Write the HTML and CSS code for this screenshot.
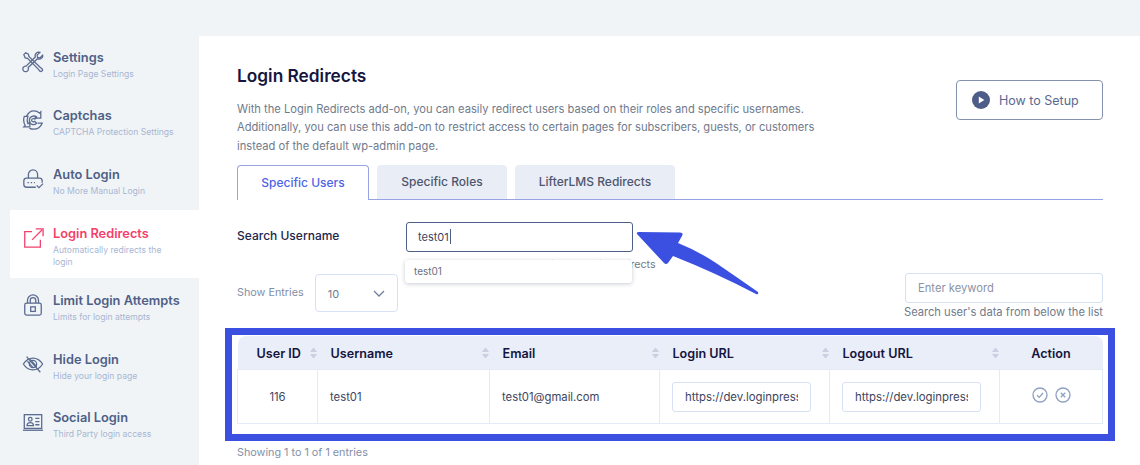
FILE: index.html
```html
<!DOCTYPE html>
<html lang="en">
<head>
    <meta charset="UTF-8">
    <meta name="viewport" content="width=device-width, initial-scale=1.0">
    <title>Login Redirects</title>
    <link rel="stylesheet" href="styles.css">
</head>
<body>
    <div class="layout">
        <aside class="sidebar">
            <a class="nav-item">
                <svg class="nav-icon" viewBox="0 0 24 24"><path d="M2 4l2-2 3 1.500.5 2.500L20 18l2 1.500.5 1.500-1.500 1.500-1.500-.5L18 20 6 8 3.500 7.500z"/><path d="M22.500 4.500l-3 3-2.500-.5-.5-2.500 3-3c-3-.8-6 1.500-5 5L4.500 16.500c-2.800-.5-4.500 2.500-3 4.800 1.500 2 5.500 1.500 5.500-1.800 0-.5 0-1-.2-1.500l10-9.500c3.500 1 6.500-1.500 5.700-4z"/></svg>
                <span class="nav-text"><strong>Settings</strong><small>Login Page Settings</small></span>
            </a>
            <a class="nav-item">
                <svg class="nav-icon" viewBox="0 0 24 24"><path d="M5 8c1.500-3.500 4.500-6 8-6 2.500 0 4.500 1 6 2.500l1.500-1.500v7h-6.500l2-2"/><path d="M5 8H2.500c-1 3-.8 7 1 10l-1.500 1.500h6.500v-5l-2 1.500C5.500 14 5.500 11 6.500 8z"/><path d="M17 15.500h5c-1.500 4-5 6.500-9.500 6.500-1.500 0-3-.4-4.500-1.200"/><path d="M16 9c-2.500-2.500-8-1.500-8 3.500s5.500 5.500 8 3l-2-2c-1.500 1-3.500.5-3.500-1.200s2-2.300 3.500-1.300z"/></svg>
                <span class="nav-text"><strong>Captchas</strong><small>CAPTCHA Protection Settings</small></span>
            </a>
            <a class="nav-item">
                <svg class="nav-icon" viewBox="0 0 24 24"><path d="M7 11V7a5 5 0 0 1 10 0v4"/><path d="M15 21H5a3 3 0 0 1-3-3v-4a3 3 0 0 1 3-3h14a3 3 0 0 1 3 3v2"/><path d="M6 16h8" stroke-dasharray="1.5 2"/><path d="M16 19l2.500 2.500L23 17"/></svg>
                <span class="nav-text"><strong>Auto Login</strong><small>No More Manual Login</small></span>
            </a>
            <a class="nav-item active">
                <svg class="nav-icon" viewBox="0 0 24 24"><path d="M11 5H3v17h17v-8"/><path d="M11 14L22 3"/><path d="M15 2h8v8"/></svg>
                <span class="nav-text"><strong>Login Redirects</strong><small>Automatically redirects the login</small></span>
            </a>
            <a class="nav-item">
                <svg class="nav-icon" viewBox="0 0 24 24"><rect x="3" y="10" width="18" height="13" rx="2"/><path d="M6 10V7a6 6 0 0 1 12 0v3"/><path d="M9 10V7a3 3 0 0 1 6 0v3"/><rect x="9.500" y="14" width="5" height="5"/></svg>
                <span class="nav-text"><strong>Limit Login Attempts</strong><small>Limits for login attempts</small></span>
            </a>
            <a class="nav-item">
                <svg class="nav-icon" viewBox="0 0 24 24"><path d="M1.500 12C4 8 8 5.500 12 5.500S20 8 22.500 12C20 16 16 18.500 12 18.500S4 16 1.500 12z"/><circle cx="12" cy="12" r="4"/><path d="M5 4l15 17"/><path d="M6 9l6 7M9 7l7 8"/></svg>
                <span class="nav-text"><strong>Hide Login</strong><small>Hide your login page</small></span>
            </a>
            <a class="nav-item">
                <svg class="nav-icon" viewBox="0 0 24 24"><rect x="2.500" y="4" width="19" height="15"/><path d="M1 21h22"/><circle cx="9" cy="9" r="2"/><path d="M5.500 16c0-4.500 7-4.500 7 0z"/><path d="M14.500 8h4.500M14.500 11.500h4.500M14.500 15h4.500"/></svg>
                <span class="nav-text"><strong>Social Login</strong><small>Third Party login access</small></span>
            </a>
        </aside>

        <main class="panel">
            <div class="panel-head">
                <div>
                    <h1>Login Redirects</h1>
                    <p>With the Login Redirects add-on, you can easily redirect users based on their roles and specific usernames. Additionally, you can use this add-on to restrict access to certain pages for subscribers, guests, or customers instead of the default wp-admin page.</p>
                </div>
                <a class="setup-btn">
                    <svg viewBox="0 0 18 18" width="18" height="18"><circle cx="9" cy="9" r="9" fill="#4d5d87"/><path d="M6.800 5.500v7l5.500-3.500z" fill="#fff"/></svg>
                    How to Setup
                </a>
            </div>

            <div class="tabs">
                <a class="tab current">Specific Users</a>
                <a class="tab">Specific Roles</a>
                <a class="tab">LifterLMS Redirects</a>
            </div>

            <div class="search-row">
                <label class="search-label">Search Username</label>
                <div class="search-field">
                    <div class="search-input">test01<span class="caret"></span></div>
                    <div class="search-hint">Search user's data from the list for login redirects</div>
                    <div class="suggest">test01</div>
                </div>
            </div>

            <div class="table-tools">
                <div class="entries">
                    <span>Show Entries</span>
                    <div class="entries-select">
                        10
                        <svg viewBox="0 0 12 7" width="12" height="7"><path d="M1 1l5 5 5-5" fill="none" stroke="#6f7f9f" stroke-width="1.300"/></svg>
                    </div>
                </div>
                <div class="keyword">
                    <input type="text" placeholder="Enter keyword">
                    <span>Search user's data from below the list</span>
                </div>
            </div>

            <table class="users">
                <thead>
                    <tr>
                        <th class="col-id"><div class="th-in">User ID<i class="sort"></i></div></th>
                        <th class="col-name"><div class="th-in">Username<i class="sort"></i></div></th>
                        <th class="col-mail"><div class="th-in">Email<i class="sort"></i></div></th>
                        <th class="col-url"><div class="th-in">Login URL<i class="sort"></i></div></th>
                        <th class="col-url"><div class="th-in">Logout URL<i class="sort"></i></div></th>
                        <th class="col-action">Action</th>
                    </tr>
                </thead>
                <tbody>
                    <tr>
                        <td class="center">116</td>
                        <td>test01</td>
                        <td>test01@gmail.com</td>
                        <td><input class="url-input" type="text" value="https://dev.loginpress.com/login"></td>
                        <td><input class="url-input" type="text" value="https://dev.loginpress.com/logout"></td>
                        <td class="center">
                            <span class="actions">
                                <svg viewBox="0 0 16 16" width="16" height="16"><circle cx="8" cy="8" r="7"/><path d="M5 8.200l2.200 2.200L11 6"/></svg>
                                <svg viewBox="0 0 16 16" width="16" height="16"><circle cx="8" cy="8" r="7"/><path d="M5.800 5.800l4.400 4.400M10.200 5.800l-4.400 4.400"/></svg>
                            </span>
                        </td>
                    </tr>
                </tbody>
            </table>
            <div class="table-info">Showing 1 to 1 of 1 entries</div>

            <!-- annotation drawn on top of the screenshot -->
            <div class="highlight"></div>
            <svg class="arrow" viewBox="0 0 125 66" width="125" height="66"><path d="M1 3Q0 1 3 1L44 1.500Q48 2 46 5L42 12Q62 20 80 32Q102 47 122 61Q123 64 120 63Q80 42 37 25L32 32Q30 34 28 32z" fill="#3b50e0"/></svg>
        </main>
    </div>
</body>
</html>
```

FILE: styles.css
```css
/* Base */
* {
    box-sizing: border-box;
}

body {
    margin: 0;
    height: 465px;
    overflow: hidden;
    background-color: #f0f4f6;
    font-family: "Inter", "Open Sans", sans-serif;
}

.layout {
    display: flex;
    padding-top: 36px;
}

/* Sidebar */
.sidebar {
    width: 199px;
    flex-shrink: 0;
    margin-top: -1.5px;
    padding-left: 10px;
}

.nav-item {
    display: flex;
    gap: 9px;
    height: 58.5px;
    padding: 15px 0 0 12px;
    color: #4f5f87;
}

.nav-icon {
    width: 22px;
    height: 22px;
    flex-shrink: 0;
    margin-top: 1px;
    fill: none;
    stroke: #5a6a90;
    stroke-width: 1.4;
}

.nav-text {
    display: flex;
    flex-direction: column;
    gap: 3px;
}

.nav-text strong {
    font-size: 12.8px;
    line-height: 15px;
    font-weight: 600;
}

.nav-text small {
    font-size: 8.6px;
    line-height: 12px;
    color: #a8b6d4;
}

.nav-item.active {
    height: 68px;
    padding-top: 16px;
    background-color: #ffffff;
    color: #f43f6b;
}

.nav-item.active .nav-icon {
    stroke: #f43f6b;
}

.nav-item.active small {
    max-width: 125px;
}

/* Main panel */
.panel {
    position: relative;
    flex: 1;
    height: 429px;
    padding: 30px 37px 0 38px;
    background-color: #ffffff;
}

.panel-head {
    display: flex;
    justify-content: space-between;
}

h1 {
    margin: 0 0 13.5px;
    font-size: 17.3px;
    line-height: 20px;
    font-weight: 600;
    color: #15153f;
}

.panel-head p {
    width: 600px;
    margin: 0;
    font-size: 11.15px;
    line-height: 18.5px;
    color: #6f7a8c;
}

.setup-btn {
    display: flex;
    align-items: center;
    gap: 9px;
    width: 147px;
    height: 40px;
    margin-top: 14px;
    padding-left: 15px;
    border: 1px solid #8492b0;
    border-radius: 4px;
    font-size: 12.5px;
    color: #5a6a90;
}

/* Tabs */
.tabs {
    display: flex;
    gap: 8px;
    height: 35px;
    margin-top: 9.5px;
    border-bottom: 1px solid #97a3e2;
}

.tab {
    display: flex;
    align-items: center;
    justify-content: center;
    width: 130px;
    height: 34px;
    border-radius: 4px 4px 0 0;
    background-color: #e9edf5;
    font-size: 12px;
    font-weight: 500;
    color: #4e566e;
}

.tab.current {
    width: 132px;
    height: 35px;
    border: 1px solid #97a3e2;
    border-bottom: none;
    background-color: #ffffff;
    color: #4f63e6;
}

.tab:last-child {
    width: 160px;
}

/* Search */
.search-row {
    display: flex;
    margin-top: 22px;
}

.search-label {
    width: 169px;
    padding-top: 6px;
    font-size: 12px;
    font-weight: 500;
    color: #22264a;
}

.search-field {
    position: relative;
    width: 227px;
}

.search-input {
    display: flex;
    align-items: center;
    height: 30px;
    padding-left: 11px;
    border: 1.5px solid #4f5f87;
    border-radius: 3px;
    font-size: 11px;
    color: #3d4560;
}

.caret {
    width: 1px;
    height: 15px;
    margin-left: 1px;
    background-color: #4f5f87;
}

.search-hint {
    margin-top: 6px;
    font-size: 10.7px;
    line-height: 14px;
    white-space: nowrap;
    color: #6f7a8c;
}

.suggest {
    position: absolute;
    top: 38px;
    left: -1px;
    width: 227px;
    height: 23px;
    padding: 5px 9px;
    border-radius: 3px;
    background-color: #ffffff;
    box-shadow: 0 1px 4px rgba(40, 50, 90, 0.25);
    font-size: 10px;
    line-height: 13px;
    color: #6b6f80;
}

/* Table tools */
.table-tools {
    display: flex;
    justify-content: space-between;
    margin-top: 2px;
}

.entries {
    display: flex;
    align-items: center;
    gap: 11px;
    height: 38px;
    font-size: 10.8px;
    color: #8390a8;
}

.entries-select {
    display: flex;
    align-items: center;
    justify-content: space-between;
    width: 83px;
    height: 38px;
    padding: 2px 12px 0 12px;
    border: 1px solid #d6e1f5;
    border-radius: 4px;
    font-size: 11px;
    color: #6f7a8c;
}

.keyword {
    display: flex;
    flex-direction: column;
    align-items: flex-end;
    margin-top: -1px;
    gap: 2px;
}

.keyword input {
    width: 198px;
    height: 30px;
    padding: 0 12px;
    border: 1px solid #d6e1f5;
    border-radius: 3px;
    font-family: inherit;
    font-size: 11.2px;
}

.keyword input::placeholder {
    color: #8b93a6;
}

.keyword span {
    font-size: 11.15px;
    line-height: 14px;
    color: #6f7a8c;
}

/* Table */
.users {
    width: 866px;
    margin-top: 17px;
    border-collapse: collapse;
    table-layout: fixed;
    font-size: 11.3px;
    color: #3d4560;
}

.col-id {
    width: 80px;
}

.col-name {
    width: 172px;
}

.col-mail {
    width: 170px;
}

.col-url {
    width: 170px;
}

.users th {
    height: 34px;
    padding: 1.5px 0 0;
    background-color: #eaeef9;
    font-size: 12.6px;
    font-weight: 600;
    text-align: left;
    color: #15153f;
}

.users th:first-child {
    border-radius: 8px 0 0 0;
}

.users th:last-child {
    border-radius: 0 8px 0 0;
    text-align: center;
}

.th-in {
    display: flex;
    align-items: center;
    justify-content: space-between;
    padding: 0 1px 0 13px;
}

.col-id .th-in {
    padding-left: 19px;
}

.sort {
    display: flex;
    flex-direction: column;
    gap: 2px;
    width: 7px;
}

.sort::before,
.sort::after {
    content: "";
    border-left: 3.5px solid transparent;
    border-right: 3.5px solid transparent;
}

.sort::before {
    border-bottom: 4px solid #c8d0e2;
}

.sort::after {
    border-top: 4px solid #c8d0e2;
}

.users td {
    height: 54px;
    padding: 0 12px;
    border: 1px solid #e4eaf6;
}

.users td.center {
    text-align: center;
}

.url-input {
    width: 139px;
    height: 30px;
    padding: 0 12px;
    border: 1px solid #d6e1f5;
    border-radius: 3px;
    font-family: inherit;
    font-size: 11.4px;
    color: #3d4560;
}

.actions {
    display: inline-flex;
    gap: 7px;
}

.actions svg {
    fill: none;
    stroke: #8ea0c0;
    stroke-width: 1.3;
}

.table-info {
    margin-top: 22px;
    font-size: 10.8px;
    color: #8390a8;
}

/* Annotation */
.highlight {
    position: absolute;
    top: 292px;
    left: 26px;
    width: 890px;
    height: 113px;
    border: 7px solid #3b50e0;
}

.arrow {
    position: absolute;
    top: 195px;
    left: 437px;
}
```
